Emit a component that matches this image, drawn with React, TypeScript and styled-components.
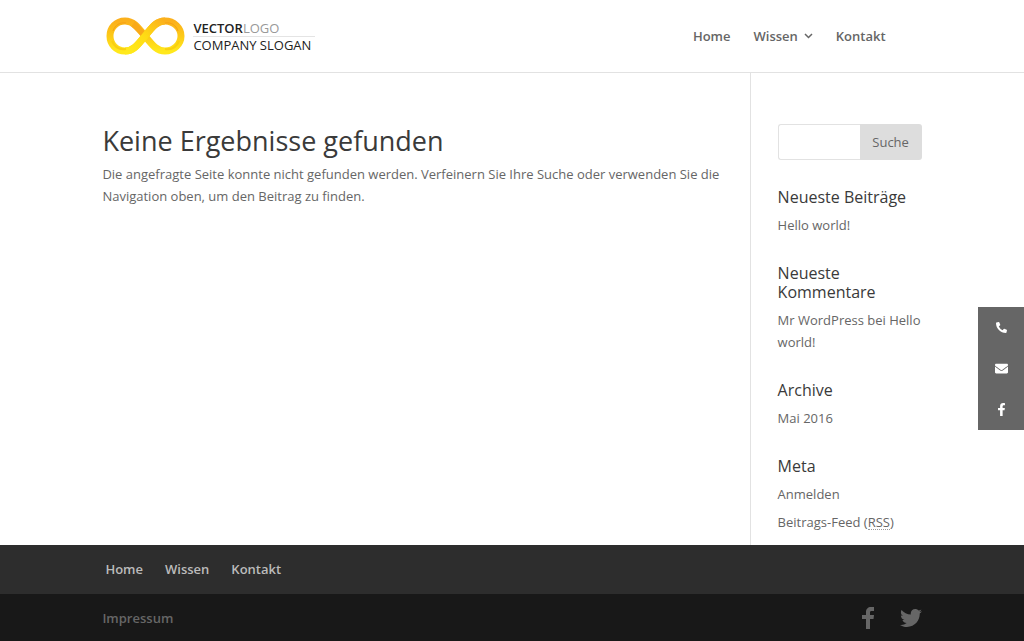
import React from "react";
import styled, { createGlobalStyle } from "styled-components";
import { FaEnvelope, FaFacebookF, FaPhoneAlt, FaTwitter } from "react-icons/fa";

const GlobalStyle = createGlobalStyle`
  *, *::before, *::after { box-sizing: border-box; }
  body {
    margin: 0;
    background: #fff;
    color: #666;
    font: 400 13px/22px "Open Sans", "Liberation Sans", sans-serif;
  }
  a { color: inherit; text-decoration: none; }
`;

const Page = styled.div`
  display: grid;
  grid-template-rows: auto minmax(0, 1fr) auto;
  height: 100vh;
`;

const Container = styled.div`
  display: flex;
  width: 80%;
  max-width: 1080px;
  margin: 0 auto;
`;

const Header = styled.header`
  border-bottom: 1px solid #e2e2e2;
`;

const HeaderInner = styled(Container)`
  align-items: center;
  justify-content: space-between;
  height: 72px;
`;

const Logo = styled.a`
  display: flex;
  align-items: center;
  gap: 8px;
  padding-left: 4px;
`;

const LogoText = styled.span`
  display: flex;
  flex-direction: column;
  color: #222;
  line-height: 16px;
`;

const LogoName = styled.span`
  border-bottom: 1px solid #e4e4e4;
  font-weight: 600;
`;

const LogoLight = styled.span`
  color: #999;
  font-weight: 400;
`;

const LogoSlogan = styled.span`
  padding-right: 4px;
`;

const TopNav = styled.nav`
  display: flex;
  gap: 23px;
  padding-right: 36px;
  font-weight: 600;
`;

const NavLink = styled.a`
  display: flex;
  align-items: center;
  gap: 6px;
`;

const Body = styled.main`
  overflow: hidden;
`;

const BodyInner = styled(Container)`
  min-height: 100%;
`;

const Content = styled.section`
  flex: 1;
  padding: 51px 24px 0 0;
`;

const Title = styled.h1`
  margin: 0 0 5px;
  color: #3a3a3a;
  font-size: 27px;
  line-height: 34px;
  font-weight: 400;
`;

const Paragraph = styled.p`
  margin: 0;
`;

const Sidebar = styled.aside`
  flex: 0 0 172px;
  min-width: 0;
  padding: 51px 0 0 27px;
  border-left: 1px solid #e2e2e2;
`;

const SearchForm = styled.form`
  display: flex;
  height: 36px;
  margin-bottom: 28px;
`;

const SearchInput = styled.input`
  flex: 1;
  min-width: 0;
  padding: 7px;
  border: 1px solid #e2e2e2;
  border-right: 0;
  border-radius: 3px 0 0 3px;
  color: #666;
  font: inherit;
`;

const SearchButton = styled.button`
  width: 62px;
  padding: 0;
  border: 0;
  border-radius: 0 3px 3px 0;
  background: #ddd;
  color: #666;
  font: inherit;
`;

const Widget = styled.section`
  margin-bottom: 28px;
`;

const WidgetTitle = styled.h4`
  margin: 0 0 7px;
  color: #3a3a3a;
  font-size: 16px;
  line-height: 19px;
  font-weight: 400;
`;

const WidgetList = styled.ul`
  display: grid;
  gap: 6px;
  margin: 0;
  padding: 0;
  list-style: none;
`;

const Abbr = styled.abbr`
  text-decoration: none;
  border-bottom: 1px dotted #999;
  display: inline-block;
  line-height: 14px;
`;

const Footer = styled.footer`
  background: #181818;
`;

const FooterNav = styled.nav`
  background: #2d2d2d;
  color: #bbb;
  font-weight: 600;
`;

const FooterLinks = styled(Container)`
  align-items: center;
  gap: 22px;
  height: 49px;
  padding: 0 0 1px 3px;
`;

const FooterBottom = styled(Container)`
  align-items: center;
  justify-content: space-between;
  height: 47px;
  color: #666;
  font-weight: 600;
`;

const Social = styled.div`
  display: flex;
  align-items: center;
  gap: 25px;
`;

const IconLink = styled.a`
  display: flex;
`;

const ContactBar = styled.nav`
  position: fixed;
  top: 307px;
  right: 0;
  display: grid;
  grid-template-rows: repeat(3, 41px);
  width: 46px;
  background: #666;
  color: #fff;
`;

const ContactLink = styled.a`
  display: flex;
  align-items: center;
  justify-content: center;
`;

const widgets = [
  { title: "Neueste Beiträge", items: [<a href="#hello">Hello world!</a>] },
  {
    title: "Neueste Kommentare",
    items: [<>Mr WordPress bei <a href="#hello">Hello world!</a></>],
  },
  { title: "Archive", items: [<a href="#mai">Mai 2016</a>] },
  {
    title: "Meta",
    items: [
      <a href="#login">Anmelden</a>,
      <a href="#feed">Beitrags-Feed (<Abbr>RSS</Abbr>)</a>,
      <a href="#comments">Kommentare als <Abbr>RSS</Abbr></a>,
    ],
  },
];

function InfinityMark() {
  return (
    <svg width="79" height="40" viewBox="0 0 79 40" fill="none" aria-hidden="true">
      <defs>
        <linearGradient id="ring" x1="0" y1="0" x2="0" y2="1">
          <stop offset="0" stopColor="#fbb01c" />
          <stop offset="0.5" stopColor="#fdca18" />
          <stop offset="1" stopColor="#ffe81c" />
        </linearGradient>
        <linearGradient id="band" x1="0" y1="1" x2="1" y2="0">
          <stop offset="0" stopColor="#ffea1c" />
          <stop offset="0.5" stopColor="#ffdc14" />
          <stop offset="1" stopColor="#fbb01c" />
        </linearGradient>
      </defs>
      <path
        d="M39 20C31 10 27 5 19 5C10 5 4 12 4 20C4 28 10 35 19 35C27 35 31 30 39 20C47 10 51 5 59 5C68 5 75 12 75 20C75 28 68 35 59 35C51 35 47 30 39 20Z"
        stroke="url(#ring)"
        strokeWidth="7"
      />
      <path d="M27 8C31 11 35 16 39 20" stroke="#f9a91a" strokeWidth="6" />
      <path d="M19 35C27 35 31 30 39 20C47 10 51 5 59 5" stroke="url(#band)" strokeWidth="7" />
      <path d="M7 15C9 9 14 6 20 7M72 15C70 9 65 6 59 7" stroke="#f6a015" strokeWidth="1" />
      <path d="M6 25C9 32 14 34 20 33M73 25C70 32 65 34 59 33" stroke="#f9cf10" strokeWidth="2" />
    </svg>
  );
}

export default function App() {
  return (
    <>
      <GlobalStyle />
      <Page>
        <Header>
          <HeaderInner>
            <Logo href="#home">
              <InfinityMark />
              <LogoText>
                <LogoName>VECTOR<LogoLight>LOGO</LogoLight></LogoName>
                <LogoSlogan>COMPANY SLOGAN</LogoSlogan>
              </LogoText>
            </Logo>
            <TopNav>
              <NavLink href="#home">Home</NavLink>
              <NavLink href="#wissen">
                Wissen
                <svg width="9" height="6" viewBox="0 0 9 6" fill="none" stroke="currentColor" strokeWidth="1.5" aria-hidden="true">
                  <path d="M1 1L4.500 4.500L8 1" />
                </svg>
              </NavLink>
              <NavLink href="#kontakt">Kontakt</NavLink>
            </TopNav>
          </HeaderInner>
        </Header>
        <Body>
          <BodyInner>
            <Content>
              <Title>Keine Ergebnisse gefunden</Title>
              <Paragraph>
                Die angefragte Seite konnte nicht gefunden werden. Verfeinern Sie Ihre Suche oder
                verwenden Sie die Navigation oben, um den Beitrag zu finden.
              </Paragraph>
            </Content>
            <Sidebar>
              <SearchForm role="search">
                <SearchInput type="text" aria-label="Suche nach" />
                <SearchButton type="button">Suche</SearchButton>
              </SearchForm>
              {widgets.map((widget) => (
                <Widget key={widget.title}>
                  <WidgetTitle>{widget.title}</WidgetTitle>
                  <WidgetList>
                    {widget.items.map((item, i) => (
                      <li key={i}>{item}</li>
                    ))}
                  </WidgetList>
                </Widget>
              ))}
            </Sidebar>
          </BodyInner>
        </Body>
        <Footer>
          <FooterNav>
            <FooterLinks>
              <a href="#home">Home</a>
              <a href="#wissen">Wissen</a>
              <a href="#kontakt">Kontakt</a>
            </FooterLinks>
          </FooterNav>
          <FooterBottom>
            <a href="#impressum">Impressum</a>
            <Social>
              <IconLink href="#facebook" aria-label="Facebook">
                <svg width="13" height="22" viewBox="0 0 13 22" fill="currentColor" aria-hidden="true">
                  <path d="M12 0V4H9.500C8.500 4 8 4.500 8 5.500V8H12L11.500 12H8V22H4V12H0V8H4V5C4 2 6 0 9 0Z" />
                </svg>
              </IconLink>
              <IconLink href="#twitter" aria-label="Twitter">
                <FaTwitter size={22} />
              </IconLink>
            </Social>
          </FooterBottom>
        </Footer>
      </Page>
      <ContactBar aria-label="Kontakt">
        <ContactLink href="#phone" aria-label="Telefon"><FaPhoneAlt size={11} /></ContactLink>
        <ContactLink href="#mail" aria-label="E-Mail"><FaEnvelope size={13} /></ContactLink>
        <ContactLink href="#facebook" aria-label="Facebook"><FaFacebookF size={13} /></ContactLink>
      </ContactBar>
    </>
  );
}
